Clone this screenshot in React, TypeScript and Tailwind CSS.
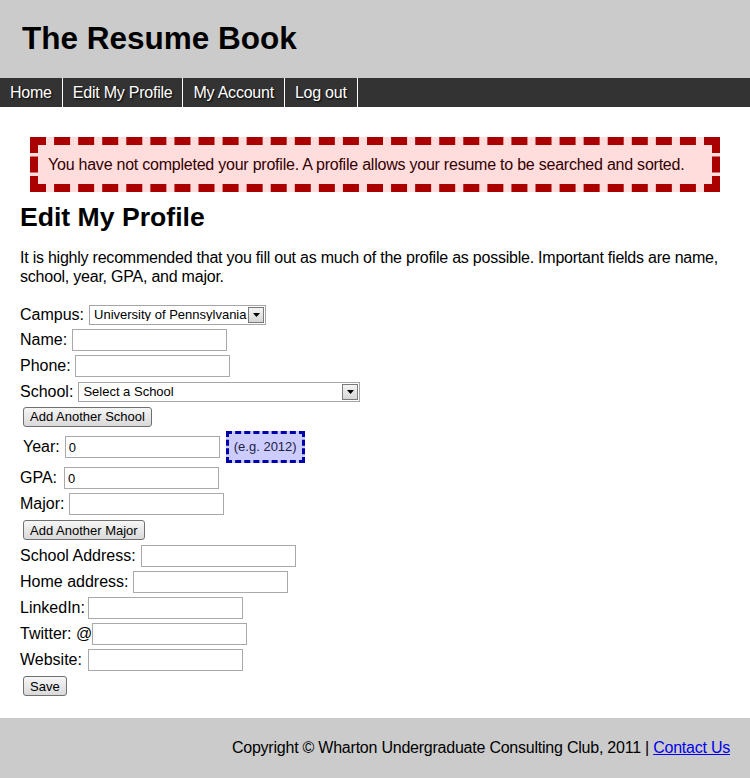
import React from 'react';

const navItems = ['Home', 'Edit My Profile', 'My Account', 'Log out'];

const Arrow = () => (
    <svg width="7" height="4" viewBox="0 0 7 4">
        <polygon points="0,0 7,0 3.5,4" fill="#000" />
    </svg>
);

const FakeSelect: React.FC<{ value: string; width: string }> = ({ value, width }) => (
    <div className={`ml-[5px] flex h-[20px] items-center border border-[#a5a5a5] bg-white tracking-normal ${width}`}>
        <span className="flex-1 truncate pl-[4px] text-[13px] leading-none">{value}</span>
        <span className="mr-[1px] flex h-[16px] w-[16px] items-center justify-center border border-[#7a7a7a] bg-linear-to-b from-[#f4f4f4] to-[#d6d6d6]">
            <Arrow />
        </span>
    </div>
);

const TextBox: React.FC<{ value?: string; className?: string }> = ({ value, className = 'ml-[5px]' }) => (
    <input
        type="text"
        defaultValue={value}
        className={`h-[22px] w-[155px] border border-[#a9a9a9] bg-white px-[3px] text-[13px] tracking-normal text-black outline-none ${className}`}
    />
);

const Btn: React.FC<{ label: string }> = ({ label }) => (
    <button className="ml-[3px] h-[20px] rounded-[3px] border border-[#707070] bg-linear-to-b from-[#f6f6f6] to-[#d9d9d9] px-[6px] text-[13px] leading-none tracking-normal text-black">
        {label}
    </button>
);

const Label: React.FC<{ text: string; className?: string }> = ({ text, className = '' }) => (
    <span className={`tracking-normal ${className}`}>{text}</span>
);

const Row: React.FC<{ h?: string; children: React.ReactNode }> = ({ h = 'h-[26px]', children }) => (
    <div className={`flex items-center ${h}`}>{children}</div>
);

export default function App() {
    return (
        <div className="min-h-[778px] w-[750px] bg-white font-['Liberation_Sans',Arial,sans-serif] text-[16px] tracking-[-0.23px] text-black">
            <header className="flex h-[78px] items-center bg-[#cbcbcb] px-[22px]">
                <h1 className="text-[31.5px] font-bold tracking-normal">The Resume Book</h1>
            </header>

            <nav className="flex h-[29px] bg-[#333333]">
                {navItems.map((item) => (
                    <a
                        key={item}
                        className="flex items-center border-r border-white px-[10px] text-white [text-shadow:1px_1px_2px_#000]"
                    >
                        {item}
                    </a>
                ))}
            </nav>

            <main className="px-[20px]">
                <div className="mx-[10px] mt-[30px] border-[8px] border-dashed border-[#aa0000] bg-[#ffdddd] p-[10px] leading-[19px] text-[#330000]">
                    You have not completed your profile. A profile allows your resume to be searched and sorted.
                </div>

                <h2 className="mt-[10px] text-[26.6px] font-bold leading-[30px] tracking-normal">Edit My Profile</h2>
                <p className="mt-[16px] leading-[19px]">
                    It is highly recommended that you fill out as much of the profile as possible. Important fields are
                    name, school, year, GPA, and major.
                </p>

                <form className="mt-[16px] mb-[19px]" onSubmit={(e) => e.preventDefault()}>
                    <Row h="h-[25px]">
                        <Label text="Campus:" />
                        <FakeSelect value="University of Pennsylvania" width="w-[177px]" />
                    </Row>
                    <Row>
                        <Label text="Name:" />
                        <TextBox />
                    </Row>
                    <Row>
                        <Label text="Phone:" />
                        <TextBox className="ml-[4px]" />
                    </Row>
                    <Row h="h-[25px]">
                        <Label text="School:" />
                        <FakeSelect value="Select a School" width="w-[282px]" />
                    </Row>
                    <Row h="h-[25px]">
                        <Btn label="Add Another School" />
                    </Row>
                    <Row h="h-[36px]">
                        <Label text="Year:" className="pl-[3px]" />
                        <TextBox value="0" />
                        <span className="ml-[6px] border-[3px] border-dashed border-[#0000aa] bg-[#ccccff] px-[5px] py-[5px] text-[13px] leading-[16px] tracking-normal text-[#222244]">
                            (e.g. 2012)
                        </span>
                    </Row>
                    <Row>
                        <Label text="GPA:" />
                        <TextBox value="0" className="ml-[7px]" />
                    </Row>
                    <Row>
                        <Label text="Major:" />
                        <TextBox />
                    </Row>
                    <Row>
                        <Btn label="Add Another Major" />
                    </Row>
                    <Row>
                        <Label text="School Address:" />
                        <TextBox />
                    </Row>
                    <Row>
                        <Label text="Home address:" />
                        <TextBox className="ml-[4px]" />
                    </Row>
                    <Row>
                        <Label text="LinkedIn:" />
                        <TextBox className="ml-[3px]" />
                    </Row>
                    <Row>
                        <Label text="Twitter: @" />
                        <TextBox className="ml-0" />
                    </Row>
                    <Row>
                        <Label text="Website:" />
                        <TextBox className="ml-[6px]" />
                    </Row>
                    <Row>
                        <Btn label="Save" />
                    </Row>
                </form>
            </main>

            <footer className="flex h-[60px] items-center justify-end bg-[#cbcbcb] pr-[20px]">
                <span>
                    Copyright © Wharton Undergraduate Consulting Club, 2011 |{' '}
                    <a href="#" className="text-[#0000ee] underline">
                        Contact Us
                    </a>
                </span>
            </footer>
        </div>
    );
}
